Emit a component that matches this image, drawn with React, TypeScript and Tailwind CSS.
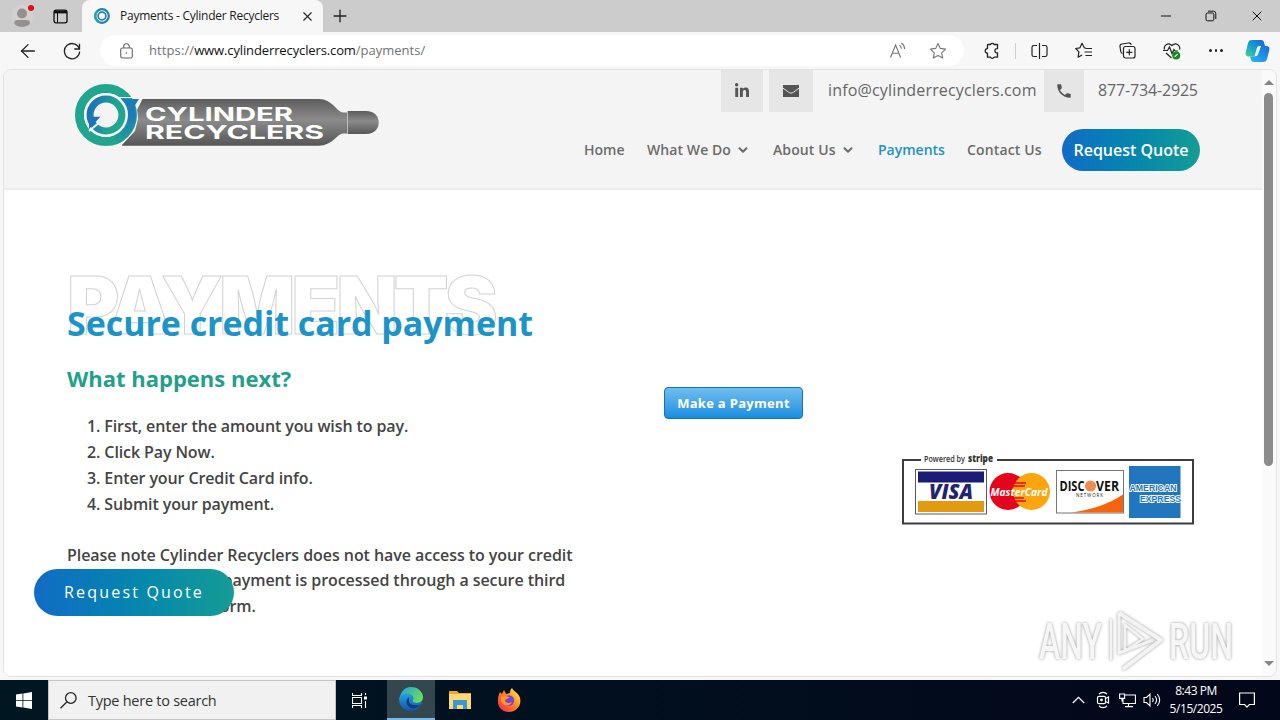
import React from 'react';
import { ArrowLeft, ChevronDown, Minus, Plus, X } from 'lucide-react';
import { FaLinkedinIn } from 'react-icons/fa';
import { MdPhone } from 'react-icons/md';

const STEPS = [
  'First, enter the amount you wish to pay.',
  'Click Pay Now.',
  'Enter your Credit Card info.',
  'Submit your payment.',
];

function RingIcon() {
  return (
    <svg width="16" height="16" viewBox="0 0 16 16" fill="none">
      <circle cx="8" cy="8" r="6.8" stroke="#1b86a8" strokeWidth="2.2" />
      <path d="M3 3.3A6.8 6.8 0 0 0 5 14" stroke="#27a597" strokeWidth="2.2" />
      <circle cx="8" cy="8" r="3.9" stroke="#2480b8" strokeWidth="1.7" />
    </svg>
  );
}

function TabStrip() {
  return (
    <div className="flex h-8 items-center bg-[#cccccc]">
      <div className="flex w-[82px] shrink-0 items-center">
        <svg className="ml-3" width="24" height="24" viewBox="0 0 24 24">
          <circle cx="10" cy="12" r="11" fill="#d3d1cf" />
          <circle cx="10" cy="9.5" r="5" fill="#93908e" />
          <path d="M2.300 18.500c0-2 1.500-2.600 3.500-2.600h8.600c2 0 3.500.6 3.500 2.600 0 2.600-3.600 4.200-7.800 4.200s-7.800-1.600-7.800-4.200z" fill="#93908e" />
          <circle cx="19" cy="4" r="3" fill="#e80b17" />
        </svg>
        <svg className="ml-[17px]" width="15" height="15" viewBox="0 0 15 15" fill="none" stroke="#111">
          <rect x="1" y="1.200" width="13" height="12.600" rx="2" strokeWidth="1.300" />
          <path d="M1 3h13" strokeWidth="2.800" />
          <path d="M4.500 4v9.500" strokeWidth="1" />
        </svg>
      </div>
      <div className="flex h-8 w-[241px] shrink-0 items-center rounded-t-lg bg-[#f7f7f7] pl-3">
        <RingIcon />
        <span className="ml-2.5 w-[180px] whitespace-nowrap text-[12px] tracking-[-0.25px] text-[#1a1a1a]">Payments - Cylinder Recyclers</span>
        <X className="h-[15px] w-[15px] shrink-0 text-[#222]" strokeWidth={1.7} />
      </div>
      <Plus className="ml-[7px] h-5 w-5 text-[#222]" strokeWidth={1.6} />
      <div className="ml-auto flex items-center text-[#111]">
        <Minus className="h-4 w-4" strokeWidth={1.5} />
        <svg className="ml-[31px]" width="12" height="12" viewBox="0 0 12 12" fill="none" stroke="#111">
          <rect x="1" y="3" width="7.800" height="7.800" rx="1.500" />
          <path d="M3 1.200h5.300a2.500 2.500 0 0 1 2.500 2.500V9" />
        </svg>
        <X className="ml-[32px] mr-[15px] h-4 w-4" strokeWidth={1.5} />
      </div>
    </div>
  );
}

function Toolbar() {
  return (
    <div className="flex h-[37px] items-center bg-[#f7f7f7] text-[#222]">
      <ArrowLeft className="ml-[17px] h-[22px] w-[22px] shrink-0" strokeWidth={1.4} />
      <svg className="ml-6 shrink-0" width="18" height="18" viewBox="0 0 18 18" fill="none" stroke="#222" strokeWidth="1.300">
        <path d="M16.300 7A7.600 7.600 0 1 0 16.600 9.500M16.500 1.800V7h-5.200" />
      </svg>
      <div className="ml-[19px] flex h-[31px] w-[864px] shrink-0 items-center rounded-full bg-white">
        <svg className="ml-5 shrink-0" width="13" height="16" viewBox="0 0 13 16" fill="none" stroke="#666" strokeWidth="1.100">
          <rect x="0.700" y="5" width="11.600" height="10" rx="1.800" />
          <path d="M3.700 5V3.500a2.800 2.800 0 0 1 5.600 0V5" />
          <circle cx="6.500" cy="10" r="0.800" fill="#666" stroke="none" />
        </svg>
        <span className="ml-4 pt-px whitespace-nowrap text-[13px] text-[#727272]">
          <span className="tracking-[0.1px]">https://</span><span className="tracking-[-0.12px] text-[#111]">www.cylinderrecyclers.com</span>/payments/
        </span>
        <svg className="ml-auto" width="18" height="17" viewBox="0 0 18 17" fill="none" stroke="#777" strokeWidth="1.100">
          <path d="M1.500 15.500L6.600 3l5 12.500M3.200 11.200h6.800M10.500 3.200c1.200.8 1.800 2 1.800 3.600M12.300 1c2.200 1.500 3.300 3.500 3.300 6" />
        </svg>
        <svg className="ml-[22px] mr-[17px]" width="18" height="18" viewBox="0 0 18 18" fill="none" stroke="#777" strokeWidth="1.100" strokeLinejoin="round">
          <path d="M9 1.500l2.300 4.900 5.300.7-3.900 3.700 1 5.300L9 13.500l-4.700 2.600 1-5.300L1.400 7.100l5.300-.7z" />
        </svg>
      </div>
      <svg className="ml-5 shrink-0" width="16" height="18" viewBox="0 0 16 18" fill="none" stroke="#222" strokeWidth="1.300" strokeLinejoin="round">
        <path d="M4.500 2.500h2a2 2 0 0 1 3.600 0h3.400v4.200c-1.500-.3-2.600.7-2.600 2.100s1.100 2.400 2.600 2.100v4.300h-3.400a2 2 0 0 1-3.600 0h-3v-4a2.300 2.300 0 0 1 0-4.600v-4z" />
      </svg>
      <div className="ml-[15px] h-4 w-px shrink-0 bg-[#cfcfcf]" />
      <svg className="ml-[15px] shrink-0" width="17" height="16" viewBox="0 0 17 16" fill="none" stroke="#222" strokeWidth="1.200">
        <path d="M8.500 0v16M6 2.500H2.800A1.800 1.800 0 0 0 1 4.300v7.400a1.800 1.800 0 0 0 1.800 1.800H6M11 2.500h3.200A1.800 1.800 0 0 1 16 4.300v7.400a1.800 1.800 0 0 1-1.800 1.800H11" />
      </svg>
      <svg className="ml-[27px] shrink-0" width="18" height="17" viewBox="0 0 18 17" fill="none" stroke="#222" strokeWidth="1.200" strokeLinejoin="round">
        <path d="M10.800 6L9.300 5.800 7 1.300 4.900 5.800l-4.200.7 3.200 3.400-.8 5.300 4-2.300M10.500 6.500H17M9.500 10H17M10.500 13.500H17" />
      </svg>
      <svg className="ml-[26px] shrink-0" width="17" height="17" viewBox="0 0 17 17" fill="none" stroke="#222" strokeWidth="1.200">
        <path d="M3.500 11.500C2 11 1.800 10 1.700 9L1 4.500C.8 3 1.500 2.200 3 2l6.500-1c1.500-.2 2.500.5 2.800 2" />
        <rect x="4.500" y="4.500" width="11.500" height="11.500" rx="2" />
        <path d="M10.300 7.300v6M7.300 10.300h6" />
      </svg>
      <svg className="ml-[27px] shrink-0" width="18" height="18" viewBox="0 0 18 18" fill="none" stroke="#222" strokeWidth="1.200">
        <path d="M1.500 7.500C.3 3 5.500-.2 9 3.500c3.500-3.700 8.700-.5 7.500 4M0 8.500h4.500L6.500 5l2.500 6.500 2-4 1 1.500h3M3 11l5.500 5" />
        <circle cx="13.200" cy="13.400" r="4" fill="#138a20" stroke="none" />
        <path d="M11.500 14.800l3.300-2.800" stroke="#d7efd8" />
      </svg>
      <div className="ml-7 flex gap-[3px]">
        <i className="h-[2.500px] w-[2.500px] rounded-full bg-[#222]" />
        <i className="h-[2.500px] w-[2.500px] rounded-full bg-[#222]" />
        <i className="h-[2.500px] w-[2.500px] rounded-full bg-[#222]" />
      </div>
      <svg className="ml-auto mr-[10px] shrink-0" width="25" height="24" viewBox="0 0 25 24">
        <defs>
          <linearGradient id="copilotA" x1="0" y1="1" x2="1" y2="0">
            <stop offset="0" stopColor="#54cf88" />
            <stop offset=".4" stopColor="#18a9cf" />
            <stop offset="1" stopColor="#1460d3" />
          </linearGradient>
          <linearGradient id="copilotB" x1="0" y1="1" x2="1" y2="0">
            <stop offset="0" stopColor="#29b9f1" />
            <stop offset="1" stopColor="#196ade" />
          </linearGradient>
        </defs>
        <path d="M7 1h9c2 0 2.700 1 3.200 3l.8 3h-4c-2 0-2.800.8-3.400 3L11 15c-.6 2-1.300 2.500-3.500 2.500H4c-3 0-4-1.600-3.100-5l2-8C3.500 2 4.500 1 7 1z" fill="url(#copilotA)" />
        <path d="M18 23H9c-2 0-2.700-1-3.200-3L5 17.400h4c2 0 2.800-.8 3.400-3L14 9.500C14.600 7.500 15.300 7 17.500 7H21c3 0 4 1.600 3.100 5l-2 7.500C21.500 22 20.500 23 18 23z" fill="url(#copilotB)" />
        <path d="M12 8.500c.7-1.100 1.700-1.500 4-1.500l-2.600 7.500c-.6 1.800-1.600 2.600-3.800 2.600z" fill="#f5fbff" />
      </svg>
    </div>
  );
}

function Logo() {
  return (
    <svg className="ml-[68px] mt-3 shrink-0" width="310" height="68" viewBox="0 0 310 68">
      <defs>
        <linearGradient id="steel" x1="0" y1="0" x2="0" y2="1">
          <stop offset="0" stopColor="#5d5d5d" />
          <stop offset=".45" stopColor="#8b8b8b" />
          <stop offset="1" stopColor="#565656" />
        </linearGradient>
        <linearGradient id="ringIn" x1="0" y1="0" x2="1" y2=".3">
          <stop offset=".1" stopColor="#1c74b8" />
          <stop offset=".8" stopColor="#20a58f" />
        </linearGradient>
        <linearGradient id="ringTail" x1="0" y1="0" x2="0" y2="1">
          <stop offset=".4" stopColor="#1c7cb8" />
          <stop offset="1" stopColor="#20a58f" />
        </linearGradient>
      </defs>
      <path d="M50 17H247c13 0 18 13 24 13.500h5v21h-5c-6 .5-11 12.200-24 12.200H50z" fill="url(#steel)" />
      <path d="M276 29h18c17 0 17 23 0 23h-18z" fill="url(#steel)" />
      <path d="M275.500 29v23" stroke="#bcbcbc" />
      <circle cx="34" cy="33" r="31.500" fill="#f4f4f4" />
      <path d="M50 13l21 3-6 12 1 9-3 12-14 15H44z" fill="#f4f4f4" />
      <circle cx="34" cy="33" r="26.500" fill="none" stroke="#20a58f" strokeWidth="9" />
      <path d="M47 17h20l-4.500 7A31 31 0 0 1 46 61.600L42 53A22 22 0 0 0 50 18z" fill="url(#ringTail)" />
      <circle cx="34" cy="33" r="20.700" fill="none" stroke="#f4f4f4" strokeWidth="2.500" />
      <path d="M47 15.500h18" stroke="#f4f4f4" strokeWidth="1.200" />
      <circle cx="34" cy="33" r="15.900" fill="none" stroke="url(#ringIn)" strokeWidth="7" />
      <path d="M17 47l11.500-12.300h-8L17 42z" fill="#1c74b8" />
      <path d="M17 49l10.500-8.500" stroke="#f4f4f4" strokeWidth="2" />
      <g fill="#fff" fontFamily="Inter, sans-serif" fontWeight="700" fontSize="19">
        <text x="73" y="38.500" textLength="148" lengthAdjust="spacingAndGlyphs">CYLINDER</text>
        <text x="73" y="56.700" textLength="179" lengthAdjust="spacingAndGlyphs">RECYCLERS</text>
      </g>
    </svg>
  );
}

function SiteHeader() {
  return (
    <header className="flex h-[120px] border-b-2 border-[#ececec] bg-[#f4f4f4] text-[#666]">
      <Logo />
      <div className="ml-auto flex w-[682px] flex-col">
        <div className="flex h-[42px] items-center pl-[141px] text-base text-[#666]">
          <span className="flex h-[42px] w-[42px] items-center justify-center bg-[#e6e6e6] text-[#555]"><FaLinkedinIn className="h-4 w-4" /></span>
          <span className="ml-1.5 flex h-[42px] w-11 items-center justify-center bg-[#e6e6e6]">
            <svg width="16" height="12" viewBox="0 0 16 12">
              <path d="M0 0h16v12H0z" fill="#555" />
              <path d="M0 3.200l5.500 4c1.800 1.200 3.200 1.200 5 0l5.500-4" fill="none" stroke="#e6e6e6" />
            </svg>
          </span>
          <span className="ml-[15px] w-[216px] whitespace-nowrap pb-0.5 tracking-[0.160px]">info@cylinderrecyclers.com</span>
          <span className="flex h-[42px] w-10 items-center justify-center bg-[#e6e6e6] text-[#555]"><MdPhone className="h-[18px] w-[18px]" /></span>
          <span className="ml-3.5 whitespace-nowrap pb-0.5 tracking-[-0.160px]">877-734-2925</span>
        </div>
        <nav className="mt-[17px] flex h-[42px] items-center whitespace-nowrap pl-1 text-[14px] font-semibold text-[#6c6c6c]">
          <span className="w-[63px] pb-0.5">Home</span>
          <span className="flex w-[126px] items-center gap-[5px] pb-0.5 tracking-[0.080px]">What We Do <ChevronDown className="mt-0.5 h-3.5 w-3.5" strokeWidth={3.5} /></span>
          <span className="flex w-[105px] items-center gap-[5px] pb-0.5 tracking-[0.100px]">About Us <ChevronDown className="mt-0.5 h-3.5 w-3.5" strokeWidth={3.5} /></span>
          <span className="w-[89px] pb-0.5 text-[#1e93bd]">Payments</span>
          <span className="w-[95px] pb-0.5 tracking-[0.150px]">Contact Us</span>
          <a className="flex h-[42px] w-[138px] items-center justify-center rounded-full bg-gradient-to-r from-[#126bc5] to-[#159c94] text-base text-white">Request Quote</a>
        </nav>
      </div>
    </header>
  );
}

function CardBanner() {
  return (
    <svg width="320" height="100" viewBox="0 0 320 100">
      <path d="M31 20H13v63.500h290V20H107" fill="none" stroke="#3d3d3d" strokeWidth="2" />
      <g fontFamily="'Open Sans', sans-serif" fill="#333">
        <text x="34" y="21.500" fontSize="8" fontWeight="600" textLength="41" lengthAdjust="spacingAndGlyphs">Powered by</text>
        <text x="78" y="21.500" fontSize="10" fontWeight="800" textLength="25" lengthAdjust="spacingAndGlyphs">stripe</text>
      </g>
      <rect x="25.500" y="29.500" width="71" height="44.500" fill="#fff" stroke="#55577c" />
      <path d="M28 31.500h66v11H28z" fill="#1b1c76" />
      <path d="M28 61h66v11H28z" fill="#e29b10" />
      <text x="39" y="59" fontFamily="'Open Sans', sans-serif" fontSize="21" fontWeight="800" fontStyle="italic" fill="#1e2470" textLength="44" lengthAdjust="spacingAndGlyphs">VISA</text>
      <circle cx="118" cy="51.500" r="18.500" fill="#e4051c" />
      <circle cx="141.500" cy="51.500" r="18.500" fill="#fca50f" />
      <path d="M125 43h11M124 46h11M123 58h11M125 61h11" stroke="#e4051c" strokeWidth="1.300" />
      <text x="100.500" y="55.500" fontFamily="'Open Sans', sans-serif" fontSize="11" fontWeight="700" fontStyle="italic" fill="#fff" textLength="57" lengthAdjust="spacingAndGlyphs">MasterCard</text>
      <rect x="166.500" y="30.500" width="67" height="42.500" fill="#fff" stroke="#777" />
      <path d="M182 72.500c22-3 39-10 51-18v18z" fill="#f5650d" />
      <circle cx="200.500" cy="46" r="5.600" fill="#ee8c50" />
      <g fontFamily="'Open Sans', sans-serif" fontWeight="700" fill="#111" fontSize="14">
        <text x="169.500" y="51" textLength="25" lengthAdjust="spacingAndGlyphs">DISC</text>
        <text x="206" y="51" textLength="23" lengthAdjust="spacingAndGlyphs">VER</text>
        <text x="186" y="56.500" fontSize="4.500" fontWeight="400" textLength="27">NETWORK</text>
      </g>
      <path d="M239 26h51.500v52H239z" fill="#2176bd" />
      <g fontFamily="'Liberation Sans', sans-serif" fontWeight="700" fill="#2176bd" stroke="#fff" strokeWidth="1.800" paintOrder="stroke" fontSize="9.500">
        <text x="239.500" y="51" textLength="47" lengthAdjust="spacingAndGlyphs">AMERICAN</text>
        <text x="250" y="62" textLength="41" lengthAdjust="spacingAndGlyphs">EXPRESS</text>
      </g>
    </svg>
  );
}

function Watermark() {
  return (
    <svg className="absolute right-[28px] bottom-0 drop-shadow-[0_0_1.500px_rgba(0,0,0,0.4)]" width="212" height="72" viewBox="0 0 212 72">
      <g fill="#f6f6f6" fontFamily="Roboto, sans-serif" fontWeight="500" fontSize="50">
        <text x="3" y="55" textLength="63" lengthAdjust="spacingAndGlyphs">ANY</text>
        <text x="133" y="55" textLength="64" lengthAdjust="spacingAndGlyphs">RUN</text>
      </g>
      <g fill="none" stroke="#f3f3f3" strokeWidth="4" strokeLinejoin="round">
        <path d="M83 9l42 27-38 29" />
        <path d="M83 9v40l34-13" strokeWidth="3" />
        <path d="M75 15v41M89 21v26l18-12z" strokeWidth="2.500" />
      </g>
    </svg>
  );
}

function PaymentPage() {
  return (
    <main className="flex h-[486px] bg-white pl-[63px]">
      <div className="w-[510px] shrink-0 pt-[71px] text-[#444]">
        <div className="h-[41px] whitespace-nowrap font-[Inter] text-[80px] leading-[88px] font-black tracking-[-4.100px] text-transparent [-webkit-text-stroke:1px_#d2d2d2]">PAYMENTS</div>
        <h1 className="relative whitespace-nowrap text-[34px] leading-[43px] font-bold tracking-[-0.050px] text-[#1c94c8]">Secure credit card payment</h1>
        <h2 className="mt-[19px] text-[22px] leading-[28px] font-bold text-[#239f8b]">What happens next?</h2>
        <ol className="mt-[21px] list-inside list-decimal pl-5 text-base leading-[26px] font-semibold tracking-[-0.110px]">
          {STEPS.map((step) => (
            <li key={step}>{step}</li>
          ))}
        </ol>
        <p className="mt-[25.500px] whitespace-nowrap text-base leading-[25.600px] font-semibold tracking-[-0.060px]">
          Please note Cylinder Recyclers does not have access to your credit<br />
          card numbers. Your payment is processed through a secure third<br />
          party payment platform.
        </p>
      </div>
      <div className="flex flex-col pt-[197px] pl-[87px]">
        <button className="h-8 w-[139px] rounded border border-[#1873b5] bg-gradient-to-b from-[#6ebdef] to-[#118ee0] pt-px text-[13px] font-bold tracking-[0.300px] whitespace-nowrap text-white">Make a Payment</button>
        <div className="mt-[21px] ml-[226px]"><CardBanner /></div>
      </div>
    </main>
  );
}

function Scrollbar() {
  return (
    <div className="flex w-[14px] shrink-0 flex-col items-center bg-[#fafafa] pt-[10px] pr-px pb-[10px]">
      <div className="border-x-[5px] border-b-[5px] border-x-transparent border-b-[#858585]" />
      <div className="mt-[8px] h-[373px] w-[9px] rounded-full bg-[#8b8b8b]" />
      <div className="mt-auto border-x-[5px] border-t-[5px] border-x-transparent border-t-[#858585]" />
    </div>
  );
}

function Taskbar() {
  return (
    <div className="flex h-10 items-center bg-gradient-to-r from-[#001722] to-[#020719] text-white">
      <svg className="ml-4 shrink-0" width="16" height="17" viewBox="0 0 16 17" fill="#fff">
        <path d="M0 2.500l6.500-1v6.500H0zM7.300 1.400L16 0v8H7.300zM0 8.800h6.500v6.700l-6.500-1zM7.300 8.800H16V17l-8.700-1.400z" />
      </svg>
      <div className="ml-4 flex h-10 w-[288px] shrink-0 items-center border border-[#c4c4c4] bg-[#f1f1f1] text-[#333]">
        <svg className="ml-2.5" width="19" height="19" viewBox="0 0 19 19" fill="none" stroke="#222" strokeWidth="1.300">
          <circle cx="11.800" cy="7" r="5.300" />
          <path d="M8 10.800L1.500 17.300" />
        </svg>
        <span className="ml-2.5 pt-0.5 text-[14.500px] tracking-[-0.260px] whitespace-nowrap">Type here to search</span>
      </div>
      <svg className="ml-4 shrink-0" width="16" height="17" viewBox="0 0 16 17" fill="none" stroke="#fff" strokeWidth="1.100">
        <path d="M.5 1v2.500h9V1M.5 16v-2.500h9V16M.5 5.500h9v6h-9zM13.500 1v2M13.500 9v7" />
        <path d="M12 4.500h3v3h-3z" fill="#fff" stroke="none" />
      </svg>
      <div className="ml-[19px] flex h-10 w-12 shrink-0 items-center justify-center border-b-2 border-[#78b8e6] bg-[#34474f]">
        <svg width="24" height="24" viewBox="0 0 24 24">
          <defs>
            <linearGradient id="edgeTop" x1="0" x2="1" y1="0" y2=".5">
              <stop stopColor="#239cda" />
              <stop offset="1" stopColor="#66dc68" />
            </linearGradient>
            <linearGradient id="edgeLow" x1="0" x2="0" y1="0" y2="1">
              <stop stopColor="#22a4e1" />
              <stop offset="1" stopColor="#1354a8" />
            </linearGradient>
          </defs>
          <path d="M1 10C2 4 6 0 12 0c7 0 12 5 12 10 0 4-3 6-6 6-3.500 0-5-1-4.500-2 2-3 0-6.500-4-6.500C5 7.500 1 11 1 16z" fill="url(#edgeTop)" />
          <path d="M0 12c0-3 3-5.500 7.500-5.500 5 0 7.500 3.500 6.500 6.500-1 1 0 3 3 3 2 0 4-1 5-1.500 1 0 1 1 .5 1.500-2 4.500-6 8-10.500 8C5 24 0 19 0 12z" fill="url(#edgeLow)" />
          <path d="M10 10c-4 3-3 9 2 11 4 1 7-.5 10-4-2 2-12 2-12-3z" fill="#113d7f" />
        </svg>
      </div>
      <svg className="ml-3.5 shrink-0" width="22" height="20" viewBox="0 0 22 20">
        <path d="M0 1h8l2 2h12v15H0z" fill="#e8a92d" />
        <path d="M0 4h22v15H0z" fill="#ffd876" />
        <path d="M4 10h14v9h-4v-4H8v4H4z" fill="#3b97d3" />
      </svg>
      <svg className="ml-[26px] shrink-0" width="24" height="24" viewBox="0 0 24 24">
        <defs>
          <linearGradient id="fox" x1="1" x2="0" y1="0" y2="1">
            <stop offset=".1" stopColor="#ffe743" />
            <stop offset=".5" stopColor="#ff7e24" />
            <stop offset="1" stopColor="#ef205d" />
          </linearGradient>
        </defs>
        <path d="M3 4l2 2 2-4 2 4 4-1c0-3 1-4 2-5 1 3 7 5 8 10 2 8-4 14-11 14S0 19 1 11c0-3 1-5 2-7z" fill="url(#fox)" />
        <circle cx="12" cy="12.500" r="5.200" fill="#7643d2" />
        <path d="M4 9c4-2 7-1 9 1-3 0-3 1-5 2 0 3 4 4 7 2-2 5-10 4-11-1z" fill="#ff9628" />
      </svg>
      <svg className="ml-auto" width="13" height="8" viewBox="0 0 13 8" fill="none" stroke="#fff" strokeWidth="1.200">
        <path d="M.8 7l5.700-5.700L12.200 7" />
      </svg>
      <svg className="ml-[11px]" width="14" height="18" viewBox="0 0 14 18" fill="none" stroke="#fff" strokeWidth="1.200">
        <path d="M3 3.200C5 .8 9 .8 11 3.200M3 14.800c2 2.400 6 2.400 8 0M9.500 7.500L12.500 6v6l-3-1.500" />
        <rect x="1.500" y="5.300" width="8" height="7.400" rx="1.500" />
        <circle cx="5.500" cy="9" r=".8" />
      </svg>
      <svg className="ml-[9px]" width="17" height="15" viewBox="0 0 17 15" fill="none" stroke="#fff" strokeWidth="1.100">
        <path d="M6 2h10.400v8.500H4V6M9.500 10.500v3M6 13.600h8M.6 1h5v4.400h-5zM3 5.400v3" />
      </svg>
      <svg className="ml-[7px]" width="18" height="16" viewBox="0 0 18 16" fill="none" stroke="#fff" strokeWidth="1.100">
        <path d="M1 5.500h2.500L7 2v12L3.500 10.500H1zM9.500 6c.8 1.200.8 2.800 0 4M12 4c2 2.500 2 5.500 0 8M14.300 2c3 3.800 3 8.200 0 12" />
      </svg>
      <div className="ml-[7px] w-[56px] text-center text-[12px] leading-[18px] tracking-[-0.450px] whitespace-nowrap">
        8:43 PM<br />5/15/2025
      </div>
      <svg className="mr-[25px] ml-[15px]" width="16" height="17" viewBox="0 0 16 17" fill="none" stroke="#fff" strokeWidth="1.200">
        <path d="M.6 1h14.800v11.500h-5L8 15.200l-2.400-2.700h-5z" />
      </svg>
    </div>
  );
}

export default function App() {
  return (
    <div className="relative flex h-[720px] w-[1280px] flex-col overflow-hidden bg-[#f7f7f7] font-['Open_Sans',sans-serif]">
      <TabStrip />
      <Toolbar />
      <div className="relative mx-[3px] mb-[3px] flex h-[608px] shrink-0 overflow-hidden rounded-lg border border-[#e2e2e2]">
        <div className="min-w-0 flex-1">
          <SiteHeader />
          <PaymentPage />
        </div>
        <Scrollbar />
        {/* Floating call to action, stays over the page copy */}
        <a className="absolute top-[499px] left-[30px] flex h-[47px] w-[200px] items-center justify-center rounded-full bg-gradient-to-r from-[#126bc5] to-[#159c94] pb-0.5 text-base font-medium tracking-[2.200px] text-white">Request Quote</a>
        <Watermark />
      </div>
      <Taskbar />
    </div>
  );
}
